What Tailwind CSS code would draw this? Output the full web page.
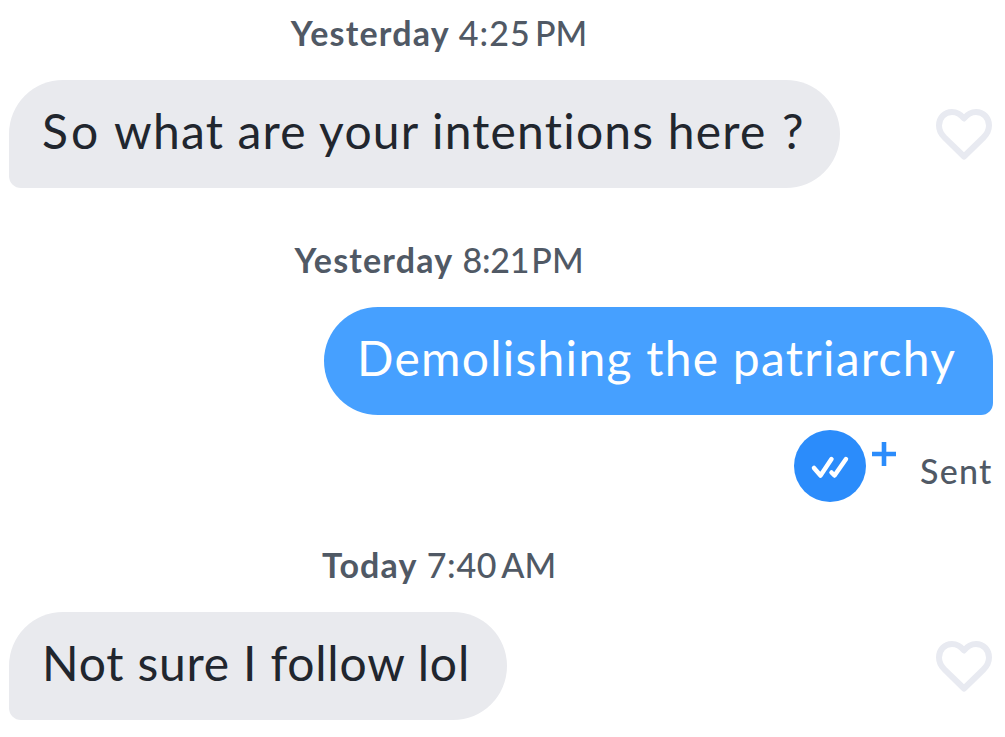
<!DOCTYPE html>
<html lang="en">
<head>
    <meta charset="UTF-8">
    <meta name="viewport" content="width=device-width, initial-scale=1.0">
    <title>Messages</title>
    <script src="https://cdn.jsdelivr.net/npm/@tailwindcss/browser@4"></script>
</head>
<body class="bg-white font-['Lato','Open_Sans',sans-serif] text-[#505965] overflow-hidden">
    <main class="w-[1005px] h-[737px] pl-[9px] pr-3 flex flex-col whitespace-nowrap">
        <!-- received -->
        <div class="w-[860px] h-20 pb-[27px] flex items-end justify-center text-[34px] leading-10">
            <b class="tracking-[1.2px] mr-[9px]">Yesterday</b><span class="font-medium tracking-[1.1px] mr-1">4:25</span><span class="font-medium">PM</span>
        </div>
        <div class="flex items-center justify-between">
            <div class="w-[831px] h-[108px] pl-[33px] pb-[7px] flex items-center rounded-[54px] rounded-bl-[12px] bg-[#e9eaee] text-[#21262e] text-[48px]">
                <p class="tracking-[1.2px]"><span class="tracking-[3.2px]">So</span> what are your intentions here<span class="ml-0.5"> ?</span></p>
            </div>
            <svg class="w-14 h-[51px] mr-px" viewBox="0 0 56 51" fill="none" stroke="#e8eaf1" stroke-width="6" stroke-linejoin="round">
                <path d="M28 9.500C24 4.500 20 3 16 3C8.500 3 3 9 3 16.500C3 21.500 5 25 8.500 28.500L28 47.500L47.500 28.500C51 25 53 21.500 53 16.500C53 9 47.500 3 40 3C36 3 32 4.500 28 9.500Z"/>
            </svg>
        </div>

        <!-- sent -->
        <div class="w-[860px] h-[119px] pb-[27px] flex items-end justify-center text-[34px] leading-10">
            <b class="tracking-[1.2px] mr-[9px]">Yesterday</b><span class="font-medium tracking-[-0.2px] mr-0.5">8:21</span><span class="font-medium">PM</span>
        </div>
        <div class="self-end w-[669px] h-[108px] pl-[33px] pb-[7px] flex items-center rounded-[54px] rounded-br-[12px] bg-[#46a0ff] text-white text-[48px]">
            <p class="tracking-[1.25px]">Demolishing the patriarchy</p>
        </div>
        <div class="mt-[15px] h-[72px] flex justify-end">
            <svg class="w-[72px] h-[72px]" viewBox="0 0 72 72" fill="none">
                <circle cx="36" cy="36" r="36" fill="#2b8cfb"/>
                <path d="M20 38L26.500 45.500L37.500 29M37.500 42.500L40.500 45.500L52 29" stroke="#fff" stroke-width="4.500" stroke-linecap="round" stroke-linejoin="round"/>
            </svg>
            <svg class="w-6 h-6 mt-3 ml-1.5" viewBox="0 0 24 24" stroke="#2b8cfb" stroke-width="4.600">
                <path d="M0 12H24M12 0V24"/>
            </svg>
            <span class="w-[73px] ml-6 mt-[21px] text-[34px] leading-10 font-medium tracking-[1.3px]">Sent</span>
        </div>

        <!-- received -->
        <div class="w-[860px] h-[110px] pb-[27px] flex items-end justify-center text-[34px] leading-10">
            <b class="tracking-[1.2px] mr-[9px]">Today</b><span class="font-medium tracking-[0.7px] mr-1">7:40</span><span class="font-medium">AM</span>
        </div>
        <div class="flex items-center justify-between">
            <div class="w-[498px] h-[108px] pl-[33px] pb-[7px] flex items-center rounded-[54px] rounded-bl-[12px] bg-[#e9eaee] text-[#21262e] text-[48px]">
                <p class="tracking-[0.8px]">Not sure I follow lol</p>
            </div>
            <svg class="w-14 h-[51px] mr-px" viewBox="0 0 56 51" fill="none" stroke="#e8eaf1" stroke-width="6" stroke-linejoin="round">
                <path d="M28 9.500C24 4.500 20 3 16 3C8.500 3 3 9 3 16.500C3 21.500 5 25 8.500 28.500L28 47.500L47.500 28.500C51 25 53 21.500 53 16.500C53 9 47.500 3 40 3C36 3 32 4.500 28 9.500Z"/>
            </svg>
        </div>
    </main>
</body>
</html>
